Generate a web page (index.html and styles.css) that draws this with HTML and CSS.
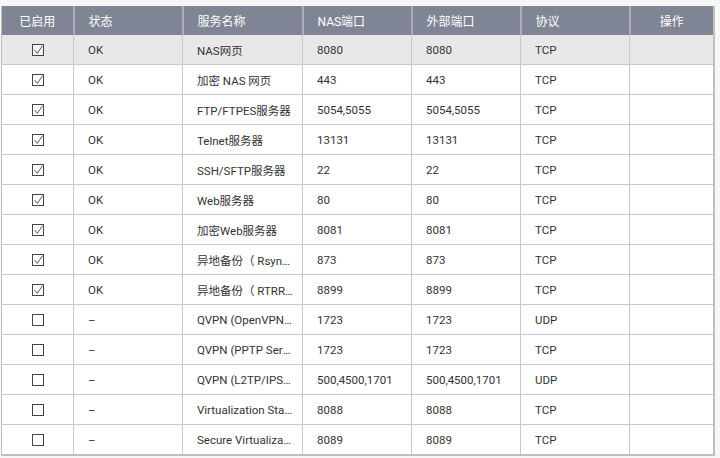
FILE: index.html
```html
<!DOCTYPE html>
<html lang="zh">
<head>
<meta charset="utf-8">
<link rel="stylesheet" href="styles.css">
</head>
<body>
<table class="grid">
  <colgroup>
    <col class="c-en"><col class="c-st"><col class="c-name"><col class="c-port"><col class="c-port"><col class="c-proto"><col class="c-op">
  </colgroup>
  <thead>
    <tr><th class="center">已启用</th><th>状态</th><th>服务名称</th><th>NAS端口</th><th>外部端口</th><th>协议</th><th class="center">操作</th></tr>
  </thead>
  <tbody>
    <tr class="sel"><td class="center"><span class="cb on"><svg viewBox="0 0 12 12"><path d="M2 6 L5.2 10 L11.5 0.8"/></svg></span></td><td>OK</td><td>NAS网页</td><td>8080</td><td>8080</td><td>TCP</td><td></td></tr>
    <tr><td class="center"><span class="cb on"><svg viewBox="0 0 12 12"><path d="M2 6 L5.2 10 L11.5 0.8"/></svg></span></td><td>OK</td><td>加密 NAS 网页</td><td>443</td><td>443</td><td>TCP</td><td></td></tr>
    <tr><td class="center"><span class="cb on"><svg viewBox="0 0 12 12"><path d="M2 6 L5.2 10 L11.5 0.8"/></svg></span></td><td>OK</td><td>FTP/FTPES服务器</td><td>5054,5055</td><td>5054,5055</td><td>TCP</td><td></td></tr>
    <tr><td class="center"><span class="cb on"><svg viewBox="0 0 12 12"><path d="M2 6 L5.2 10 L11.5 0.8"/></svg></span></td><td>OK</td><td>Telnet服务器</td><td>13131</td><td>13131</td><td>TCP</td><td></td></tr>
    <tr><td class="center"><span class="cb on"><svg viewBox="0 0 12 12"><path d="M2 6 L5.2 10 L11.5 0.8"/></svg></span></td><td>OK</td><td>SSH/SFTP服务器</td><td>22</td><td>22</td><td>TCP</td><td></td></tr>
    <tr><td class="center"><span class="cb on"><svg viewBox="0 0 12 12"><path d="M2 6 L5.2 10 L11.5 0.8"/></svg></span></td><td>OK</td><td>Web服务器</td><td>80</td><td>80</td><td>TCP</td><td></td></tr>
    <tr><td class="center"><span class="cb on"><svg viewBox="0 0 12 12"><path d="M2 6 L5.2 10 L11.5 0.8"/></svg></span></td><td>OK</td><td>加密Web服务器</td><td>8081</td><td>8081</td><td>TCP</td><td></td></tr>
    <tr><td class="center"><span class="cb on"><svg viewBox="0 0 12 12"><path d="M2 6 L5.2 10 L11.5 0.8"/></svg></span></td><td>OK</td><td>异地备份（ Rsync）</td><td>873</td><td>873</td><td>TCP</td><td></td></tr>
    <tr><td class="center"><span class="cb on"><svg viewBox="0 0 12 12"><path d="M2 6 L5.2 10 L11.5 0.8"/></svg></span></td><td>OK</td><td>异地备份（ RTRR）</td><td>8899</td><td>8899</td><td>TCP</td><td></td></tr>
    <tr><td class="center"><span class="cb"></span></td><td>–</td><td>QVPN (OpenVPN Server)</td><td>1723</td><td>1723</td><td>UDP</td><td></td></tr>
    <tr><td class="center"><span class="cb"></span></td><td>–</td><td>QVPN (PPTP Server)</td><td>1723</td><td>1723</td><td>TCP</td><td></td></tr>
    <tr><td class="center"><span class="cb"></span></td><td>–</td><td>QVPN (L2TP/IPSec)</td><td>500,4500,1701</td><td>500,4500,1701</td><td>UDP</td><td></td></tr>
    <tr><td class="center"><span class="cb"></span></td><td>–</td><td>Virtualization Station</td><td>8088</td><td>8088</td><td>TCP</td><td></td></tr>
    <tr><td class="center"><span class="cb"></span></td><td>–</td><td>Secure Virtualization Station</td><td>8089</td><td>8089</td><td>TCP</td><td></td></tr>
  </tbody>
</table>
</body>
</html>
```
FILE: styles.css
```css
html, body {
  margin: 0;
  padding: 0;
  background: #f7f7f7;
}
body {
  padding: 6px 0 0 1px;
  font-family: Roboto, "Noto Sans CJK SC", sans-serif;
  font-size: 11.5px;
  color: #333;
}
.grid {
  width: 714px;
  table-layout: fixed;
  border-collapse: collapse;
  background: #fff;
  border-left: 1px solid #bfbfbf;
  border-right: 2px solid #bfbfbf;
  border-bottom: 2px solid #bfbfbf;
}
.c-en { width: 72px; }
.c-st { width: 109px; }
.c-name { width: 120px; }
.c-port { width: 109px; }
.c-proto { width: 109px; }
.c-op { width: auto; }
th {
  height: 29px;
  padding: 0 8px 0 14px;
  background: #7f8595;
  color: #fff;
  font-size: 12px;
  font-weight: normal;
  text-align: left;
  border-right: 2px solid #a9adb8;
  white-space: nowrap;
}
th:last-child { border-right: none; }
td {
  height: 29px;
  padding: 0 9px 0 14px;
  border-right: 1px solid #c8c8c8;
  border-bottom: 1px solid #c8c8c8;
  white-space: nowrap;
  overflow: hidden;
  text-overflow: ellipsis;
}
td:last-child { border-right: none; }
.center { text-align: center; padding: 0; }
.sel td { background: #e8e8e8; }
.cb {
  display: inline-block;
  width: 10px;
  height: 10px;
  border: 1px solid #444;
  background: #fff;
  vertical-align: middle;
}
.sel .cb { background: #f4f4f4; }
.cb svg {
  display: block;
  width: 10px;
  height: 10px;
  overflow: visible;
}
.cb svg path {
  fill: none;
  stroke: #333;
  stroke-width: 1;
}
```
